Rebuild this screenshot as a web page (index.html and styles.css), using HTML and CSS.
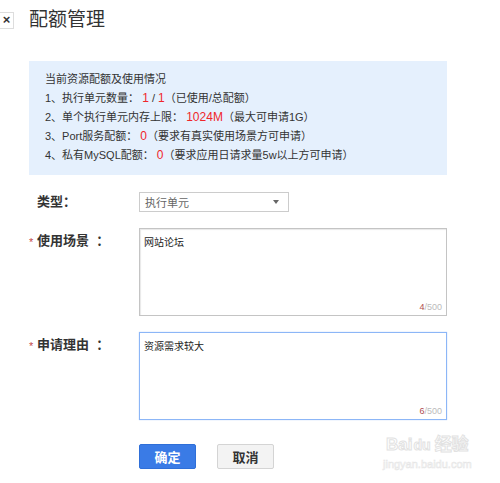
FILE: index.html
```html
<!DOCTYPE html>
<html lang="zh-CN">

<head>
  <meta charset="UTF-8" />
  <meta name="viewport" content="width=device-width, initial-scale=1.0" />
  <title>配额管理</title>
  <link rel="stylesheet" href="styles.css">
</head>

<body>
  <div class="dialog">
    <div class="dialog-head">
      <span class="close-btn">×</span>
      <h1 class="title">配额管理</h1>
    </div>

    <div class="quota-info">
      <p>当前资源配额及使用情况</p>
      <p>1、执行单元数量： <span class="num">1</span> / <span class="num">1</span>（已使用/总配额）</p>
      <p>2、单个执行单元内存上限： <span class="num">1024M</span>（最大可申请1G）</p>
      <p>3、Port服务配额： <span class="num">0</span>（要求有真实使用场景方可申请）</p>
      <p>4、私有MySQL配额： <span class="num">0</span>（要求应用日请求量5w以上方可申请）</p>
    </div>

    <form class="apply-form">
      <label class="field-label" for="type">类型：</label>
      <div class="select-box" id="type">
        <span>执行单元</span>
        <span class="arrow"></span>
      </div>

      <label class="field-label multi" for="scene"><i class="req">*</i>使用场景&nbsp;&nbsp;：</label>
      <div class="text-wrap">
        <textarea id="scene" class="text-area">网站论坛</textarea>
        <span class="counter"><b>4</b>/500</span>
      </div>

      <label class="field-label multi" for="reason"><i class="req">*</i>申请理由&nbsp;&nbsp;：</label>
      <div class="text-wrap">
        <textarea id="reason" class="text-area focused">资源需求较大</textarea>
        <span class="counter"><b>6</b>/500</span>
      </div>

      <div></div>
      <div class="actions">
        <button type="button" class="btn btn-ok">确定</button>
        <button type="button" class="btn btn-cancel">取消</button>
      </div>
    </form>
  </div>

  <div class="watermark">
    <div class="wm-logo">Bai<span class="wm-du">du</span>经验</div>
    <div class="wm-url">jingyan.baidu.com</div>
  </div>
</body>

</html>
```

FILE: styles.css
```css
body {
  margin: 0;
  padding: 0;
  background: #fff;
  color: #333;
  font-family: "Liberation Sans", "Noto Sans CJK SC", sans-serif;
  position: relative;
  min-height: 483px;
}

.dialog-head {
  display: flex;
  align-items: center;
  padding-top: 10px;
}

.close-btn {
  width: 13px;
  height: 15px;
  border: 1px solid #ddd;
  border-left: none;
  font-size: 13px;
  line-height: 14px;
  text-align: center;
  font-weight: bold;
  color: #333;
  margin-right: 15px;
}

.title {
  margin: 0;
  font-size: 19px;
  font-weight: normal;
  line-height: 20px;
  color: #333;
}

.quota-info {
  margin: 31px 0 0 29px;
  width: 418px;
  box-sizing: border-box;
  padding: 9px 16px 10px;
  background: #e5f0fd;
}

.quota-info p {
  margin: 0;
  font-size: 11px;
  line-height: 19px;
  color: #333;
}

.quota-info .num {
  color: #f0262b;
  font-size: 12px;
  line-height: 1;
}

.apply-form {
  display: grid;
  grid-template-columns: 110px 308px;
  row-gap: 16px;
  margin: 17px 0 0 29px;
}

.field-label {
  font-size: 13px;
  font-weight: bold;
  padding-left: 8px;
  line-height: 20px;
  position: relative;
}

.field-label.multi {
  padding-top: 3px;
}

.field-label .req {
  position: absolute;
  left: 0;
  top: 4px;
  font-style: normal;
  font-weight: normal;
  color: #c4474a;
  font-size: 11px;
}

.select-box {
  width: 150px;
  height: 20px;
  box-sizing: border-box;
  border: 1px solid #ccc;
  display: flex;
  align-items: center;
  justify-content: space-between;
  padding: 0 9px 0 5px;
  font-size: 11px;
  color: #666;
}

.select-box .arrow {
  width: 0;
  height: 0;
  border-left: 3px solid transparent;
  border-right: 3px solid transparent;
  border-top: 4px solid #666;
}

.text-wrap {
  position: relative;
  height: 88px;
}

.text-area {
  display: block;
  width: 100%;
  height: 100%;
  box-sizing: border-box;
  margin: 0;
  resize: none;
  border: 1px solid #c4c4c4;
  box-shadow: inset 1px 1px 1px #e8e8e8;
  padding: 8px 4px;
  font-family: "Liberation Sans", "Noto Sans CJK SC", sans-serif;
  font-size: 10px;
  line-height: 12px;
  color: #222;
}

.text-area.focused {
  border: 1px solid #8cb6f7;
  box-shadow: 0 0 1px #a9c8fa;
}

.counter {
  position: absolute;
  right: 5px;
  bottom: 4px;
  font-size: 9px;
  color: #bbb;
}

.counter b {
  font-weight: normal;
  color: #b04c4f;
}

.actions {
  display: flex;
  gap: 21px;
  margin-top: 8px;
}

.btn {
  width: 57px;
  height: 25px;
  border-radius: 2px;
  font-family: "Liberation Sans", "Noto Sans CJK SC", sans-serif;
  font-size: 13px;
  font-weight: bold;
  cursor: pointer;
  padding: 0;
}

.btn-ok {
  background: #3a7be6;
  border: 1px solid #2f6fd8;
  color: #fff;
}

.btn-cancel {
  background: #f3f3f3;
  border: 1px solid #d4d4d4;
  color: #333;
}

/* faint site stamp in the corner */
.watermark {
  position: absolute;
  left: 383px;
  top: 432px;
  color: #fff;
  -webkit-text-stroke: 1px #e2e2e2;
  text-align: center;
}

.wm-logo {
  font-size: 17px;
  font-weight: bold;
  line-height: 26px;
}

.wm-du {
  margin: 0 4px 0 1px;
  font-size: 14px;
}

.wm-url {
  font-size: 11px;
  line-height: 12px;
  -webkit-text-stroke: 0.6px #e6e6e6;
}
```
